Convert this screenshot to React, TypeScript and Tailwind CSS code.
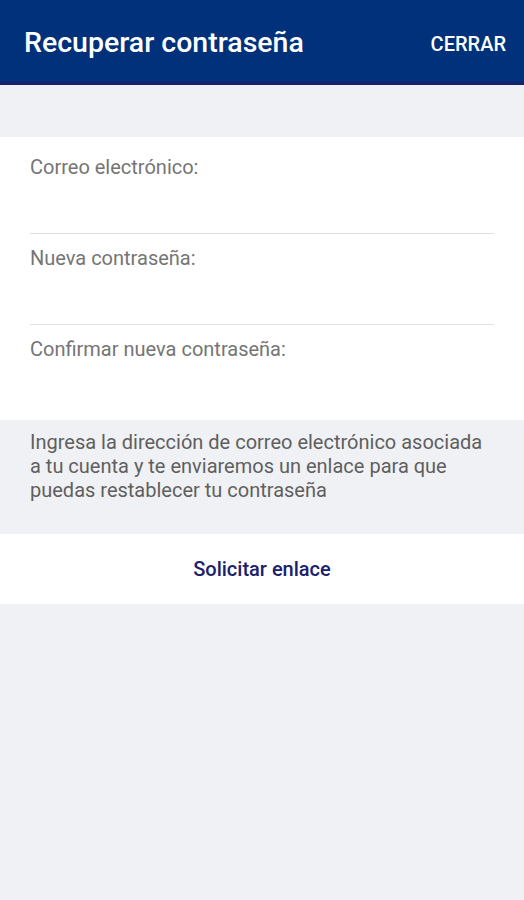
export default function App() {
  const fields = ['Correo electrónico:', 'Nueva contraseña:', 'Confirmar nueva contraseña:'];

  return (
    <div className="min-h-[900px] bg-[#f0f1f4] font-['Roboto',sans-serif]">
      {/* Top bar */}
      <header className="h-[85px] bg-[#00317a] border-b-[3px] border-[#1c2070] flex items-center justify-between pl-6 pr-[18px]">
        <h1 className="text-[28.5px] font-medium text-white leading-none mt-[5px]">Recuperar contraseña</h1>
        <button className="text-[20px] font-medium text-white leading-none mt-[5px]">CERRAR</button>
      </header>

      <div className="h-[52px]" />

      {/* Form fields */}
      <section className="bg-white pt-[6px]">
        {fields.map((label, i) => (
          <div
            key={label}
            className={i < fields.length - 1 ? 'mx-[30px] border-b border-[#e0e0e0] pt-3 pb-[54px]' : 'mx-[30px] pt-3 pb-[59px]'}
          >
            <div className="text-[20px] leading-6 text-[#757575]">{label}</div>
          </div>
        ))}
      </section>

      <p className="px-[30px] pt-[10px] pb-8 text-[20px] leading-6 text-[#5f5f5f]">
        Ingresa la dirección de correo electrónico asociada a tu cuenta y te enviaremos un enlace para que puedas
        restablecer tu contraseña
      </p>

      <div className="bg-white h-[70px] flex items-center justify-center">
        <button className="text-[20px] font-medium text-[#1b216e] leading-none">Solicitar enlace</button>
      </div>
    </div>
  );
}
